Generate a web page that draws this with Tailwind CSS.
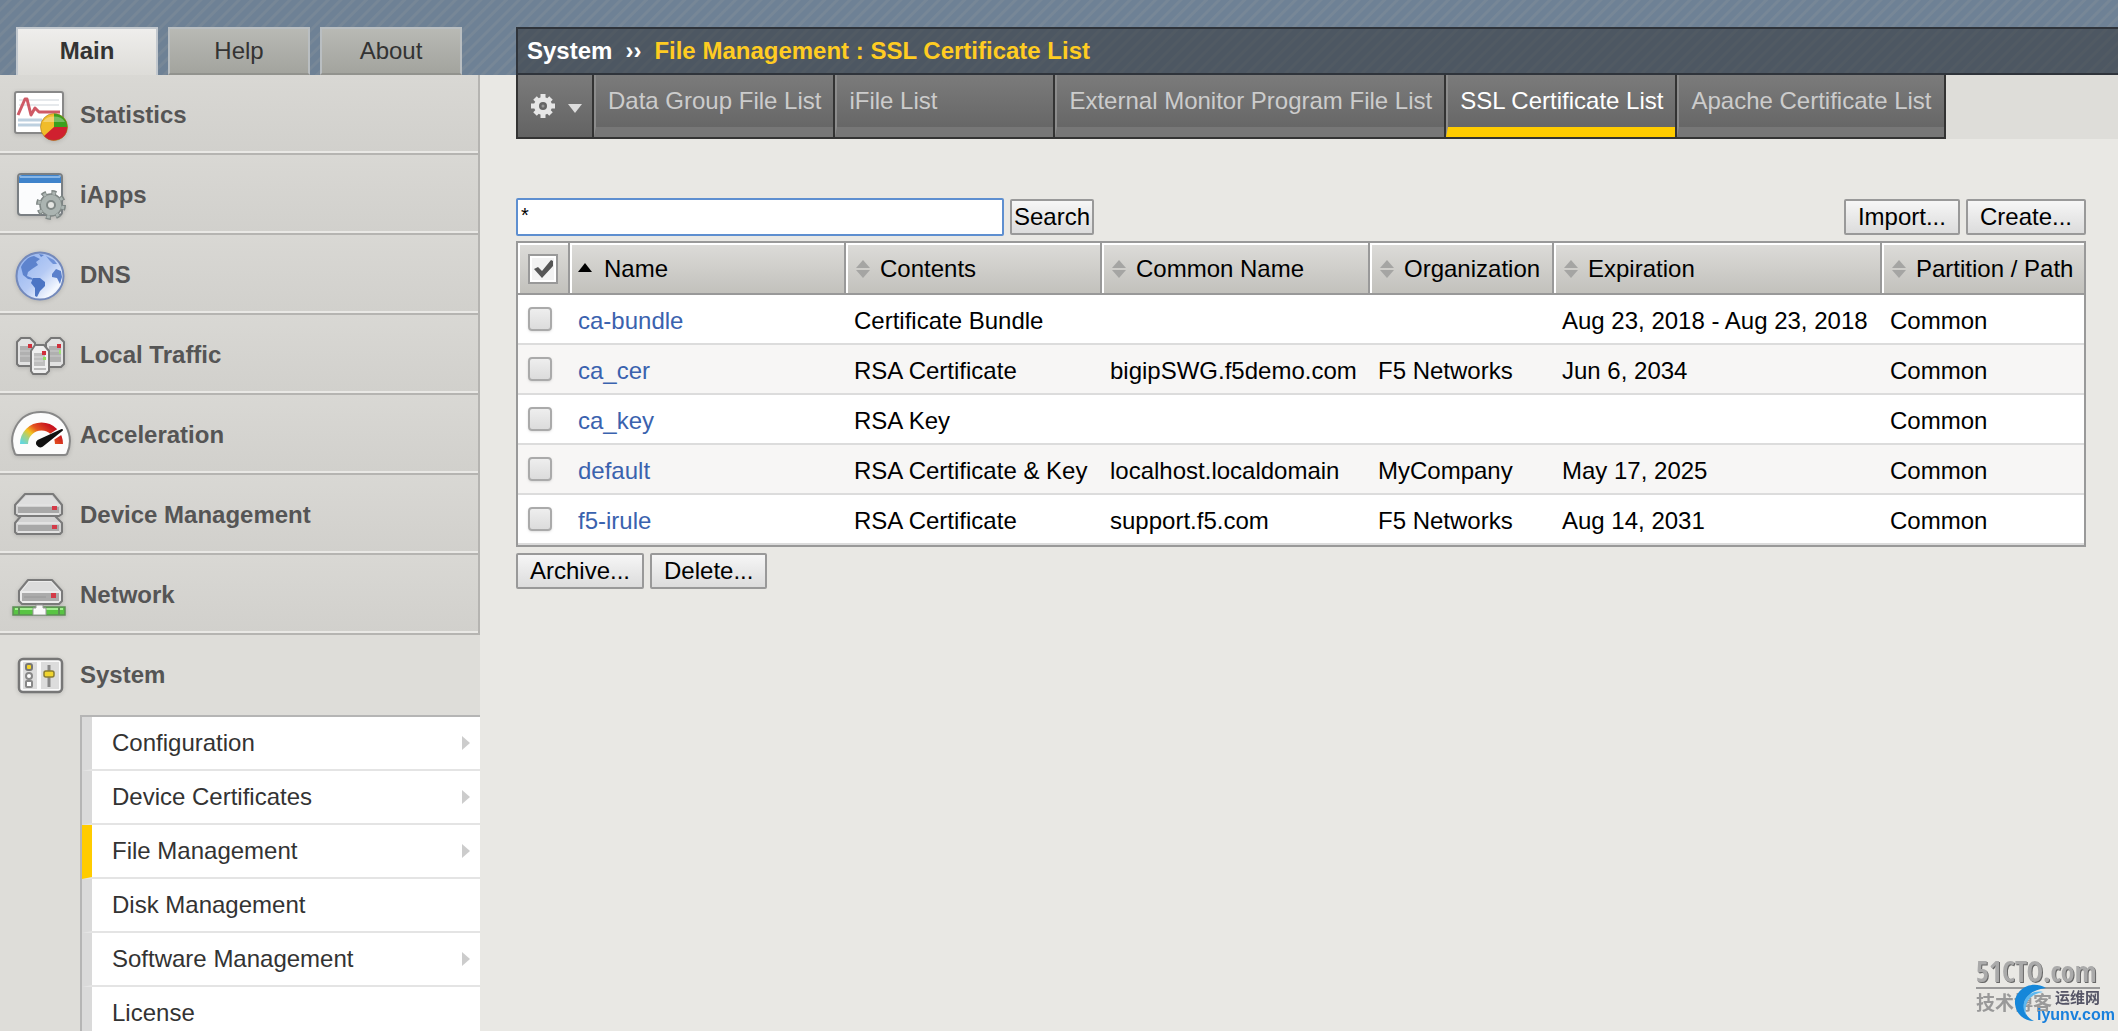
<!DOCTYPE html>
<html lang="en">
<head>
    <meta charset="UTF-8">
    <meta name="viewport" content="width=device-width, initial-scale=1.0">
    <title>SSL Certificate List</title>
    <script src="https://cdn.jsdelivr.net/npm/@tailwindcss/browser@4"></script>
</head>
<body class="h-screen overflow-hidden flex flex-col bg-[#e9e8e4] font-['Liberation_Sans',Arial,sans-serif] text-2xl leading-7 text-black">
    <!-- Top banner -->
    <header class="flex shrink-0 items-end h-[75px] bg-[repeating-linear-gradient(135deg,#6e8195_0px,#6e8195_5px,#778797_6px,#778797_8px,#6e8195_9px)]">
        <div class="w-[480px] shrink-0 flex gap-[10px] pl-4">
            <button class="w-[142px] h-12 border-2 border-b-0 border-[#c2c8ce] bg-linear-to-b from-[#efeeec] to-[#dddcd8] pb-[2px] font-bold text-[#333]">Main</button>
            <button class="w-[142px] h-12 border-2 border-[#b9bec1] border-b-[#92938e] bg-linear-to-b from-[#b8b9b4] to-[#a3a49e] text-[#333]">Help</button>
            <button class="w-[142px] h-12 border-2 border-[#b9bec1] border-b-[#92938e] bg-linear-to-b from-[#b8b9b4] to-[#a3a49e] text-[#333]">About</button>
        </div>
        <div class="ml-9 flex-1 h-12 flex items-center gap-[13px] pl-[9px] border-2 border-r-0 border-[#2f343b] bg-[#2b2d2f]/50 font-bold">
            <span class="text-white">System</span>
            <span class="text-white">&rsaquo;&rsaquo;</span>
            <h1 class="text-[#fc2]">File Management : SSL Certificate List</h1>
        </div>
    </header>

    <div class="flex flex-1 min-h-0">
        <!-- Sidebar -->
        <aside class="w-[480px] shrink-0 bg-[#deddd9]">
            <nav class="font-bold text-[#555]">
                <a href="#" class="flex items-center h-20 pt-[2px] pl-3 gap-2 border-r-2 border-b-2 border-[#b5b4b1] bg-linear-to-b from-[#d9d8d4] to-[#d1d0cc] shadow-[inset_0_-2px_0_#e9e8e5]">
                    <svg class="w-[60px] h-[60px] drop-shadow-sm" viewBox="0 0 60 60">
                        <rect x="3" y="7" width="48" height="41" rx="2" fill="#fff" stroke="#888" stroke-width="2"/>
                        <path d="M7 15h40M7 20h40" stroke="#e6e9ec" stroke-width="2"/>
                        <path d="M6 35h24M6 40h24" stroke="#bdd0df" stroke-width="3"/>
                        <path d="M6 30l7-16h2l4 16 4-7 4 4h21" fill="none" stroke="#cf5a66" stroke-width="3" stroke-linejoin="round"/>
                        <circle cx="42" cy="42" r="13.500" fill="#f0bc2a"/>
                        <path d="M42 42V28.500A13.500 13.500 0 0 1 55.500 42z" fill="#3ba01d"/>
                        <path d="M42 42H55.500A13.500 13.500 0 0 1 32 51z" fill="#d0202f"/>
                        <circle cx="42" cy="42" r="13.500" fill="none" stroke="#9a6a20" stroke-opacity=".5"/>
                        <path d="M31 37a12 9 0 0 1 22 0" fill="#fff" opacity=".3"/>
                    </svg>
                    Statistics
                </a>
                <a href="#" class="flex items-center h-20 pt-[2px] pl-3 gap-2 border-r-2 border-b-2 border-[#b5b4b1] bg-linear-to-b from-[#d9d8d4] to-[#d1d0cc] shadow-[inset_0_-2px_0_#e9e8e5]">
                    <svg class="w-[60px] h-[60px] drop-shadow-sm" viewBox="0 0 60 60">
                        <rect x="6" y="9" width="44" height="41" rx="3" fill="#fbfcfd" stroke="#7a7f83" stroke-width="2"/>
                        <path d="M7 18v-5a3 3 0 0 1 3-3h36a3 3 0 0 1 3 3v5z" fill="#3f83cb"/>
                        <path d="M8 12h40" stroke="#86b5e6" stroke-width="2"/>
                        <circle cx="39" cy="40" r="12.500" fill="none" stroke="#7f8785" stroke-width="5" stroke-dasharray="4.800 5.020"/>
                        <circle cx="39" cy="40" r="11" fill="#abb4b1" stroke="#7f8785" stroke-width="1.500"/>
                        <circle cx="39" cy="40" r="12" fill="none" stroke="#abb4b1" stroke-width="3" stroke-dasharray="3 6.425" stroke-dashoffset="-1"/>
                        <circle cx="39" cy="40" r="4" fill="#e4e5e2" stroke="#7f8785" stroke-width="2"/>
                    </svg>
                    iApps
                </a>
                <a href="#" class="flex items-center h-20 pt-[2px] pl-3 gap-2 border-r-2 border-b-2 border-[#b5b4b1] bg-linear-to-b from-[#d9d8d4] to-[#d1d0cc] shadow-[inset_0_-2px_0_#e9e8e5]">
                    <svg class="w-[60px] h-[60px] drop-shadow-sm" viewBox="0 0 60 60">
                        <defs>
                            <linearGradient id="globe" x1="0" y1="0" x2="1" y2="1">
                                <stop offset="0" stop-color="#8eb0ee"/>
                                <stop offset=".5" stop-color="#b5caf4"/>
                                <stop offset=".8" stop-color="#f4f8ff"/>
                                <stop offset="1" stop-color="#c5d6f6"/>
                            </linearGradient>
                        </defs>
                        <circle cx="28" cy="31" r="23.500" fill="url(#globe)" stroke="#7389bb" stroke-width="2"/>
                        <path d="M9 22c3-6 7-10 13-11l6 3-4 3 2 3-6 4-4 3-1 4 5 2 2 2-6-1-5-4z" fill="#5d83cd"/>
                        <path d="M21 33l7 0 5 4 0 4-5 5-3 6-2-1 0-8-4-5z" fill="#4c75c4"/>
                        <path d="M40 29l4-5 5 2 1 6-2 7-3-6-5-1z" fill="#5b80cb"/>
                        <path d="M34 11l8 4 3 4-4 0-3-3z" fill="#6f92d8"/>
                        <path d="M27 9l5 1-3 2z" fill="#5d83cd"/>
                    </svg>
                    DNS
                </a>
                <a href="#" class="flex items-center h-20 pt-[2px] pl-3 gap-2 border-r-2 border-b-2 border-[#b5b4b1] bg-linear-to-b from-[#d9d8d4] to-[#d1d0cc] shadow-[inset_0_-2px_0_#e9e8e5]">
                    <svg class="w-[60px] h-[60px] drop-shadow-sm" viewBox="0 0 60 60">
                        <g stroke="#777" stroke-width="2" stroke-linejoin="round">
                            <path d="M5 17l4-4h9l5 5v23H7l-2-2z" fill="#e2e2e2"/>
                            <path d="M34 18l5-5h9l4 4v22l-3 3H34z" fill="#e2e2e2"/>
                        </g>
                        <path d="M8 21h12v16H8zM37 21h12v16H37z" fill="#b0b0b0"/>
                        <path d="M8 26h12M8 31h12M37 26h12M37 31h12" stroke="#ccc"/>
                        <path d="M20 25v4M48 25v4" stroke="#9fe07a" stroke-width="2"/>
                        <path d="M16 19h4v4h-4zM45 19h4v4h-4z" fill="#d0303c"/>
                        <path d="M19 26l4-6h9l5 6v20l-3 3H21l-2-3z" fill="#efefef" stroke="#777" stroke-width="2" stroke-linejoin="round"/>
                        <path d="M22 28h11v13H22z" fill="#bfbfbf"/>
                        <path d="M22 32h9M22 36h9" stroke="#ddd"/>
                        <path d="M22 44h12" stroke="#bbb" stroke-width="2"/>
                        <path d="M30 26h4v4h-4z" fill="#d0303c"/>
                        <path d="M31 32h3v3h-3z" fill="#8fe060"/>
                    </svg>
                    Local Traffic
                </a>
                <a href="#" class="flex items-center h-20 pt-[2px] pl-3 gap-2 border-r-2 border-b-2 border-[#b5b4b1] bg-linear-to-b from-[#d9d8d4] to-[#d1d0cc] shadow-[inset_0_-2px_0_#e9e8e5]">
                    <svg class="w-[60px] h-[60px] drop-shadow-sm overflow-visible" viewBox="0 0 60 60">
                        <defs>
                            <linearGradient id="gauge" x1="0" y1="1" x2="1" y2=".4">
                                <stop offset="0" stop-color="#64d6dc"/>
                                <stop offset=".25" stop-color="#a9d17a"/>
                                <stop offset=".42" stop-color="#f2c420"/>
                                <stop offset=".65" stop-color="#e5531f"/>
                                <stop offset="1" stop-color="#c8141e"/>
                            </linearGradient>
                        </defs>
                        <path d="M3 49C-5 31 5 7 29 7s34 24 26 42c0 0-1 1-3 1H6c-2 0-3-1-3-1z" fill="#fcfcfc" stroke="#888" stroke-width="2"/>
                        <path d="M12 39a17 17 0 0 1 35 0" fill="none" stroke="url(#gauge)" stroke-width="8"/>
                        <path d="M32 37L52 24" stroke="#fff" stroke-width="7"/>
                        <path d="M26 36l24-11-20 16c-3 2-7-3-4-5z" fill="#111" stroke="#111" stroke-width="2" stroke-linejoin="round"/>
                    </svg>
                    Acceleration
                </a>
                <a href="#" class="flex items-center h-20 pt-[2px] pl-3 gap-2 border-r-2 border-b-2 border-[#b5b4b1] bg-linear-to-b from-[#d9d8d4] to-[#d1d0cc] shadow-[inset_0_-2px_0_#e9e8e5]">
                    <svg class="w-[60px] h-[60px] drop-shadow-sm" viewBox="0 0 60 60">
                        <g fill="#d2d2d2" stroke="#7a7a7a" stroke-width="2" stroke-linejoin="round">
                            <path d="M3 38l6-7h34l7 7v9l-2 2H5l-2-2z"/>
                            <path d="M3 20l10-11h28l9 11v9l-3 2H6l-3-2z"/>
                        </g>
                        <path d="M6 19l8-8h26l7 8z" fill="#dedede"/>
                        <path d="M6 22h41v6H6zM6 40h41v6H6z" fill="#a8a8a8"/>
                        <path d="M5 20h43M5 38h43M6 29h41M6 47h41" stroke="#f2f2f2"/>
                        <path d="M40 21h5v4h-5zM40 40h5v4h-5z" fill="#d43a48"/>
                    </svg>
                    Device Management
                </a>
                <a href="#" class="flex items-center h-20 pt-[2px] pl-3 gap-2 border-r-2 border-b-2 border-[#b5b4b1] bg-linear-to-b from-[#d9d8d4] to-[#d1d0cc] shadow-[inset_0_-2px_0_#e9e8e5]">
                    <svg class="w-[60px] h-[60px] drop-shadow-sm" viewBox="0 0 60 60">
                        <path d="M7 26l9-11h24l10 11v10l-3 3H10l-3-3z" fill="#ececec" stroke="#7a7a7a" stroke-width="2" stroke-linejoin="round"/>
                        <path d="M10 26l7-9h22l8 9z" fill="#dcdcdc"/>
                        <path d="M10 28h37v8H10z" fill="#ababab"/>
                        <path d="M12 32h22" stroke="#989898"/>
                        <path d="M39 28h5v5h-5z" fill="#d43a48"/>
                        <rect x="1" y="42" width="52" height="8" fill="#58c443" stroke="#5d8f55" stroke-width="1.500"/>
                        <path d="M3 44h48" stroke="#a4ee93" stroke-width="2"/>
                        <path d="M7 42v8M47 42v8" stroke="#5d8f55" stroke-width="2"/>
                        <path d="M24 40h7v3h3v7H21v-7h3z" fill="#fafafa" stroke="#999"/>
                    </svg>
                    Network
                </a>
                <a href="#" class="flex items-center h-20 pl-3 gap-2">
                    <svg class="w-[60px] h-[60px] drop-shadow-sm" viewBox="0 0 60 60">
                        <rect x="7" y="14" width="43" height="33" rx="4" fill="#fafafa" stroke="#777" stroke-width="2.500"/>
                        <path d="M11 17h14v27H11zM29 17h18v27H29z" fill="#dcdcdc"/>
                        <rect x="14" y="19" width="6" height="6" rx="2" fill="#f5d427" stroke="#777" stroke-width="2"/>
                        <circle cx="17" cy="31" r="3" fill="#fff" stroke="#888" stroke-width="2"/>
                        <rect x="14" y="36" width="6" height="6" rx="1" fill="#fff" stroke="#888" stroke-width="2"/>
                        <path d="M37 20v22" stroke="#888" stroke-width="3"/>
                        <rect x="32" y="26" width="10" height="6" rx="2" fill="#f0d52f" stroke="#8a7d33" stroke-width="1.500"/>
                    </svg>
                    System
                </a>
            </nav>
            <ul class="ml-20 border-l-2 border-t-2 border-[#b5b5b5] text-[#333]">
                <li class="border-l-10 border-l-[#dadada] border-b-2 border-b-[#e4e4e4] bg-white">
                    <a href="#" class="flex items-center justify-between h-[52px] pl-5 pr-[10px]">Configuration <svg class="w-2 h-4" viewBox="0 0 8 16"><path d="M0 1l8 7-8 7z" fill="#ccc"/></svg></a>
                </li>
                <li class="border-l-10 border-l-[#dadada] border-b-2 border-b-[#e4e4e4] bg-white">
                    <a href="#" class="flex items-center justify-between h-[52px] pl-5 pr-[10px]">Device Certificates <svg class="w-2 h-4" viewBox="0 0 8 16"><path d="M0 1l8 7-8 7z" fill="#ccc"/></svg></a>
                </li>
                <li class="border-l-10 border-l-[#fc0] border-b-2 border-b-[#e4e4e4] bg-white">
                    <a href="#" class="flex items-center justify-between h-[52px] pl-5 pr-[10px]">File Management <svg class="w-2 h-4" viewBox="0 0 8 16"><path d="M0 1l8 7-8 7z" fill="#ccc"/></svg></a>
                </li>
                <li class="border-l-10 border-l-[#dadada] border-b-2 border-b-[#e4e4e4] bg-white">
                    <a href="#" class="flex items-center h-[52px] pl-5">Disk Management</a>
                </li>
                <li class="border-l-10 border-l-[#dadada] border-b-2 border-b-[#e4e4e4] bg-white">
                    <a href="#" class="flex items-center justify-between h-[52px] pl-5 pr-[10px]">Software Management <svg class="w-2 h-4" viewBox="0 0 8 16"><path d="M0 1l8 7-8 7z" fill="#ccc"/></svg></a>
                </li>
                <li class="border-l-10 border-l-[#dadada] border-b-2 border-b-[#e4e4e4] bg-white">
                    <a href="#" class="flex items-center h-[52px] pl-5">License</a>
                </li>
            </ul>
        </aside>

        <main class="flex-1 min-w-0 pl-9">
            <!-- Page tabs -->
            <nav class="flex h-16 bg-[#deddd9] text-[#ccc] whitespace-nowrap">
                <button aria-label="Options" class="flex items-center gap-3 w-[78px] pl-3 border-2 border-t-0 border-[#333] bg-linear-to-b from-[#7b7b7b] to-[#636363]">
                    <svg class="w-[26px] h-[26px]" viewBox="0 0 26 26">
                        <g stroke="#e6e6e6" stroke-width="5">
                            <path d="M13 1v24M1 13h24M5 5l16 16M21 5L5 21"/>
                        </g>
                        <circle cx="13" cy="13" r="9" fill="#e6e6e6"/>
                        <circle cx="13" cy="13" r="4" fill="#666"/>
                        <circle cx="13" cy="13" r="1.500" fill="#999"/>
                    </svg>
                    <svg class="w-[14px] h-[9px] mt-1" viewBox="0 0 14 9"><path d="M0 0h14L7 9z" fill="#ddd"/></svg>
                </button>
                <a href="#" class="border-b-2 border-r-2 border-[#333] bg-linear-to-b from-[#7b7b7b] to-[#636363]"><span class="block h-full pt-3 px-3 border-l-2 border-l-[#8c8c8c] border-b-10 border-b-[#777]">Data Group File List</span></a>
                <a href="#" class="min-w-[220px] border-b-2 border-r-2 border-[#333] bg-linear-to-b from-[#7b7b7b] to-[#636363]"><span class="block h-full pt-3 px-3 border-l-2 border-l-[#8c8c8c] border-b-10 border-b-[#777]">iFile List</span></a>
                <a href="#" class="border-b-2 border-r-2 border-[#333] bg-linear-to-b from-[#7b7b7b] to-[#636363]"><span class="block h-full pt-3 px-3 border-l-2 border-l-[#8c8c8c] border-b-10 border-b-[#777]">External Monitor Program File List</span></a>
                <a href="#" class="border-b-2 border-r-2 border-[#333] bg-linear-to-b from-[#7b7b7b] to-[#636363] text-white"><span class="block h-full pt-3 px-3 border-l-2 border-l-[#8c8c8c] border-b-10 border-b-[#fc0]">SSL Certificate List</span></a>
                <a href="#" class="border-b-2 border-r-2 border-[#333] bg-linear-to-b from-[#7b7b7b] to-[#636363]"><span class="block h-full pt-3 px-3 border-l-2 border-l-[#8c8c8c] border-b-10 border-b-[#777]">Apache Certificate List</span></a>
            </nav>

            <div class="pr-8">
                <!-- Search and actions -->
                <div class="flex items-center mt-[59px] mb-[5px] gap-[6px]">
                    <input type="text" value="*" aria-label="Search certificates" class="w-[488px] h-[38px] px-[3px] pb-1 rounded-xs border-2 border-[#5e8fd0] bg-white text-xl outline-none">
                    <button class="h-9 px-[2px] rounded-xs border-2 border-[#999] bg-linear-to-b from-[#f6f6f6] to-[#dcdcdc]">Search</button>
                    <button class="ml-auto h-9 px-3 rounded-xs border-2 border-[#999] bg-linear-to-b from-[#f6f6f6] to-[#dcdcdc]">Import...</button>
                    <button class="h-9 px-3 rounded-xs border-2 border-[#999] bg-linear-to-b from-[#f6f6f6] to-[#dcdcdc]">Create...</button>
                </div>

                <table class="w-full table-fixed border-separate border-spacing-0 border-2 border-[#999] whitespace-nowrap">
                    <colgroup>
                        <col class="w-[52px]">
                        <col>
                        <col class="w-[256px]">
                        <col class="w-[268px]">
                        <col class="w-[184px]">
                        <col class="w-[328px]">
                        <col class="w-[202px]">
                    </colgroup>
                    <thead>
                        <tr class="h-[52px] text-left bg-linear-to-b from-[#dddcd9] to-[#c1c0bb]">
                            <th class="pl-[10px] pt-[2px] border-r-2 border-b-2 border-[#999] shadow-[inset_2px_2px_0_#fff]">
                                <span class="relative block w-[30px] h-[30px]">
                                    <input type="checkbox" checked aria-label="Select all" class="appearance-none block w-[30px] h-[30px] border-2 border-[#999] bg-[#f2f2f2] shadow-[inset_0_0_0_2px_#fff]">
                                    <svg class="absolute inset-0 pointer-events-none" viewBox="0 0 30 30"><path d="M6 15l4-2 4 4 9-11 2 1v5L14 24z" fill="#555"/></svg>
                                </span>
                            </th>
                            <th class="pl-2 pt-[2px] border-r-2 border-b-2 border-[#999] shadow-[inset_2px_2px_0_#fff] font-normal">
                                <span class="flex items-center gap-3"><svg class="w-[14px] h-[18px]" viewBox="0 0 14 18"><path d="M7 3l7 9H0z" fill="#000"/></svg>Name</span>
                            </th>
                            <th class="pl-[10px] pt-[2px] border-r-2 border-b-2 border-[#999] shadow-[inset_2px_2px_0_#fff] font-normal">
                                <span class="flex items-center gap-[10px]"><svg class="w-[14px] h-[18px]" viewBox="0 0 14 18"><path d="M7 0l7 8H0zM0 10h14l-7 8z" fill="#a5a5a3"/></svg>Contents</span>
                            </th>
                            <th class="pl-[10px] pt-[2px] border-r-2 border-b-2 border-[#999] shadow-[inset_2px_2px_0_#fff] font-normal">
                                <span class="flex items-center gap-[10px]"><svg class="w-[14px] h-[18px]" viewBox="0 0 14 18"><path d="M7 0l7 8H0zM0 10h14l-7 8z" fill="#a5a5a3"/></svg>Common Name</span>
                            </th>
                            <th class="pl-[10px] pt-[2px] border-r-2 border-b-2 border-[#999] shadow-[inset_2px_2px_0_#fff] font-normal">
                                <span class="flex items-center gap-[10px]"><svg class="w-[14px] h-[18px]" viewBox="0 0 14 18"><path d="M7 0l7 8H0zM0 10h14l-7 8z" fill="#a5a5a3"/></svg>Organization</span>
                            </th>
                            <th class="pl-[10px] pt-[2px] border-r-2 border-b-2 border-[#999] shadow-[inset_2px_2px_0_#fff] font-normal">
                                <span class="flex items-center gap-[10px]"><svg class="w-[14px] h-[18px]" viewBox="0 0 14 18"><path d="M7 0l7 8H0zM0 10h14l-7 8z" fill="#a5a5a3"/></svg>Expiration</span>
                            </th>
                            <th class="pl-[10px] pt-[2px] border-b-2 border-[#999] shadow-[inset_2px_2px_0_#fff] font-normal">
                                <span class="flex items-center gap-[10px]"><svg class="w-[14px] h-[18px]" viewBox="0 0 14 18"><path d="M7 0l7 8H0zM0 10h14l-7 8z" fill="#a5a5a3"/></svg>Partition / Path</span>
                            </th>
                        </tr>
                    </thead>
                    <tbody id="certRows"></tbody>
                </table>

                <div class="flex gap-[6px] mt-[6px]">
                    <button class="h-9 px-3 rounded-xs border-2 border-[#999] bg-linear-to-b from-[#f6f6f6] to-[#dcdcdc]">Archive...</button>
                    <button class="h-9 px-3 rounded-xs border-2 border-[#999] bg-linear-to-b from-[#f6f6f6] to-[#dcdcdc]">Delete...</button>
                </div>
            </div>
        </main>
    </div>

    <!-- Watermark -->
    <div class="fixed right-0 bottom-1 w-[142px] h-[70px] pointer-events-none whitespace-nowrap">
        <div class="absolute left-0 top-0 text-[28px] leading-7 font-bold font-['Liberation_Sans_Narrow','Open_Sans_Condensed','Liberation_Sans',sans-serif] text-[#aaa] [text-shadow:1px_1px_0_#666]">51CTO.com</div>
        <div class="absolute left-0 top-[30px] w-[124px] h-[2px] bg-[#999]"></div>
        <div class="absolute left-0 top-[35px] text-[19px] leading-5 font-bold font-['Noto_Sans_CJK_SC',sans-serif] text-[#999]">技术博客</div>
        <svg class="absolute left-[38px] top-[26px] w-[34px] h-[40px]" viewBox="0 0 34 40">
            <path d="M32 5C16-4 0 8 1 21c1 10 9 17 19 17C4 30 6 8 32 5z" fill="#1687d9"/>
            <path d="M29 9C14 6 5 20 12 32 10 18 17 11 29 9z" fill="#5db8f0"/>
        </svg>
        <div class="absolute left-[79px] top-[30px] text-[15px] leading-5 font-bold font-['Noto_Sans_CJK_SC',sans-serif] text-[#556]">运维网</div>
        <div class="absolute left-[61px] top-[48px] text-base leading-5 font-bold text-[#1a80dc]">iyunv.com</div>
    </div>

<script>
    const certs = [
        { name: 'ca-bundle', contents: 'Certificate Bundle', cn: '', org: '', expires: 'Aug 23, 2018 - Aug 23, 2018' },
        { name: 'ca_cer', contents: 'RSA Certificate', cn: 'bigipSWG.f5demo.com', org: 'F5 Networks', expires: 'Jun 6, 2034' },
        { name: 'ca_key', contents: 'RSA Key', cn: '', org: '', expires: '' },
        { name: 'default', contents: 'RSA Certificate &amp; Key', cn: 'localhost.localdomain', org: 'MyCompany', expires: 'May 17, 2025' },
        { name: 'f5-irule', contents: 'RSA Certificate', cn: 'support.f5.com', org: 'F5 Networks', expires: 'Aug 14, 2031' }
    ];

    document.getElementById('certRows').innerHTML = certs.map(cert => `
        <tr class="h-[50px] bg-white even:bg-[#f7f6f5]">
            <td class="pl-[10px] border-b-2 border-[#dcdcdc]"><input type="checkbox" aria-label="Select ${cert.name}" class="appearance-none block w-6 h-6 rounded-sm border-2 border-[#aaa] bg-linear-to-b from-[#eee] to-[#dcdcdc] shadow-sm"></td>
            <td class="pl-2 pt-1 border-b-2 border-[#dcdcdc]"><a href="#" class="text-[#3a62ae]">${cert.name}</a></td>
            <td class="pl-2 pt-1 border-b-2 border-[#dcdcdc]">${cert.contents}</td>
            <td class="pl-2 pt-1 border-b-2 border-[#dcdcdc]">${cert.cn}</td>
            <td class="pl-2 pt-1 border-b-2 border-[#dcdcdc]">${cert.org}</td>
            <td class="pl-2 pt-1 border-b-2 border-[#dcdcdc]">${cert.expires}</td>
            <td class="pl-2 pt-1 border-b-2 border-[#dcdcdc]">Common</td>
        </tr>
    `).join('');
</script>
</body>
</html>
